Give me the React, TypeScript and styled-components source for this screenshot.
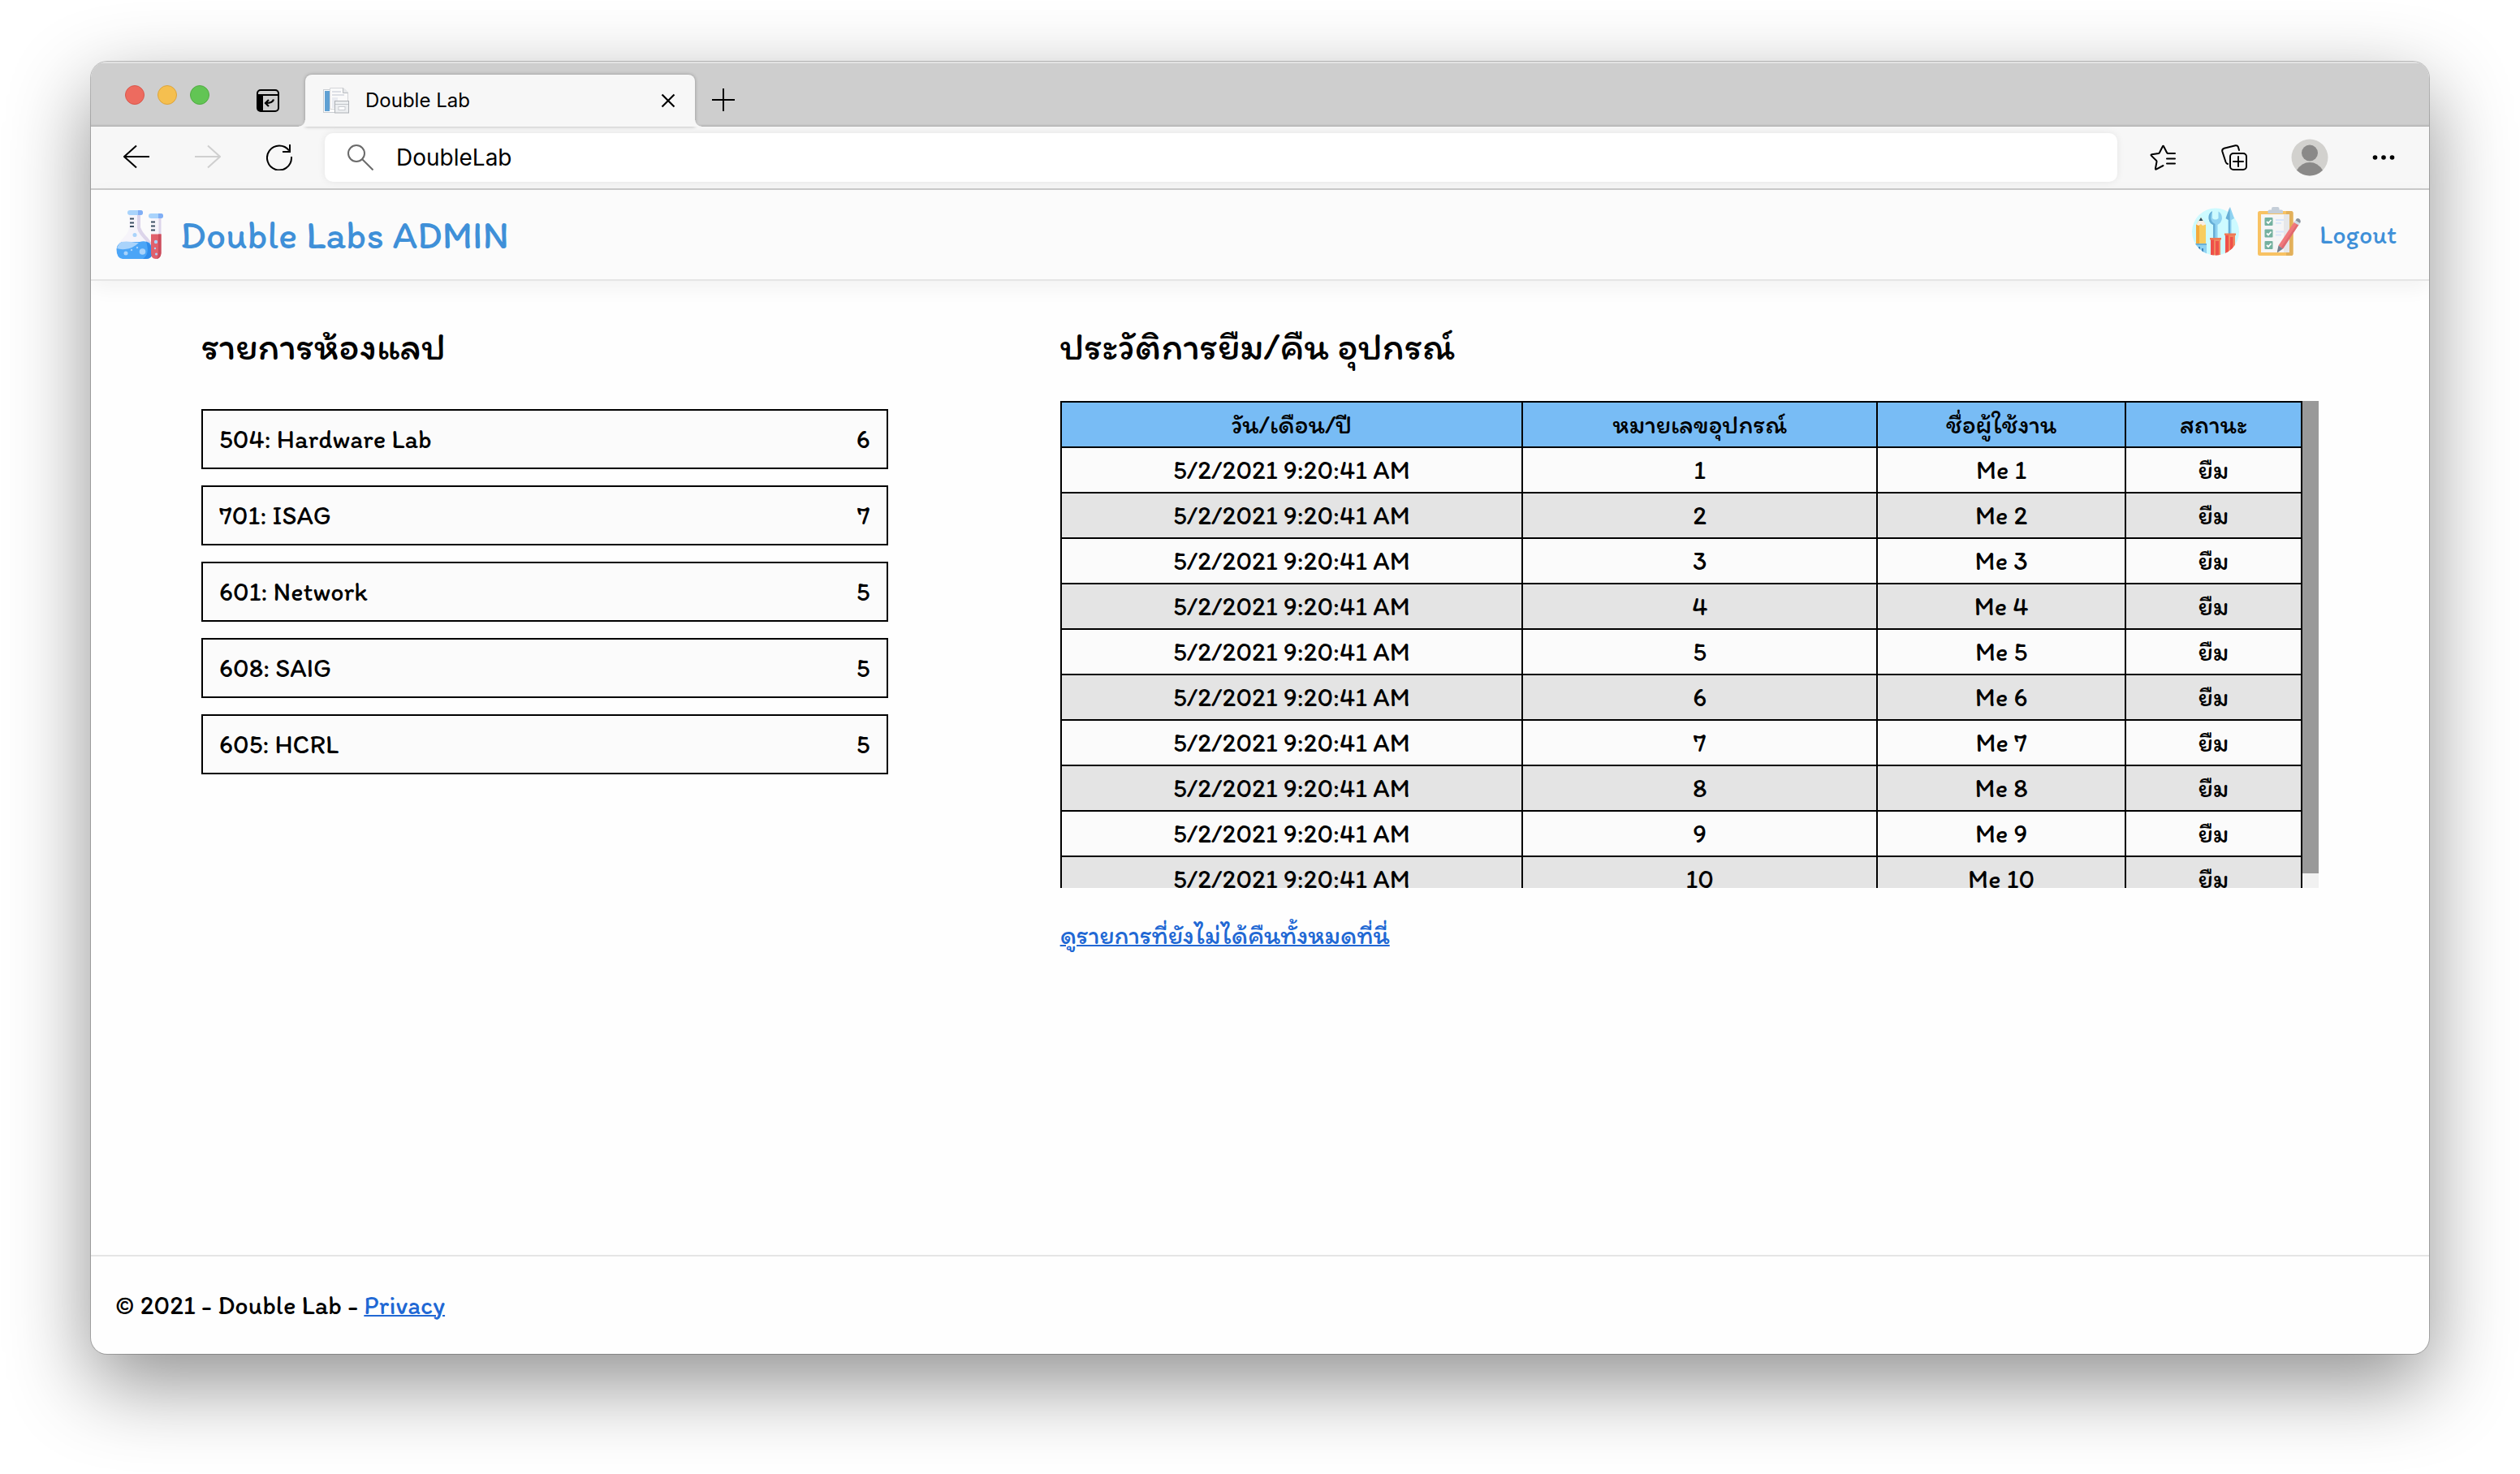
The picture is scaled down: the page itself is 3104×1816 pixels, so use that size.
import React from "react";
import styled, { createGlobalStyle } from "styled-components";

const uiFont = `Inter, "Liberation Sans", sans-serif`;
const pageFont = `Itim, "Noto Sans Thai", "Noto Sans", sans-serif`;
const blue = "#3f90d8";

const GlobalStyle = createGlobalStyle`
  *, *::before, *::after { box-sizing: border-box; }
  body { margin: 0; background: #fff; }
  h1, h2, p, ul { margin: 0; padding: 0; font: inherit; }
  button { margin: 0; padding: 0; border: 0; background: none; cursor: pointer; color: inherit; font: inherit; }
  svg { display: block; }
`;

const Desktop = styled.div`
  display: flex;
  min-height: 100vh;
  padding: 76px 112px 148px;
`;

const Window = styled.div`
  flex: 1;
  display: flex;
  flex-direction: column;
  min-width: 0;
  overflow: hidden;
  border-radius: 20px;
  background: #fefefe;
  box-shadow: 0 0 0 1px rgba(0, 0, 0, 0.22), 0 36px 100px rgba(0, 0, 0, 0.44);
`;

const TitleBar = styled.div`
  display: flex;
  align-items: flex-end;
  height: 80px;
  padding-left: 42px;
  background: #cecece;
  box-shadow: inset 0 2px 0 #e2e2e2, inset 0 -3px 3px -2px rgba(0, 0, 0, 0.2);
`;

const Lights = styled.div`
  display: flex;
  gap: 16px;
  margin-bottom: 27px;
`;

const Light = styled.button<{ $fill: string; $edge: string }>`
  width: 24px;
  height: 24px;
  border: 1px solid ${(p) => p.$edge};
  border-radius: 50%;
  background: ${(p) => p.$fill};
`;

const TabActions = styled.button`
  margin: 0 32px 18px 58px;
`;

const Tab = styled.div`
  position: relative;
  display: flex;
  align-items: center;
  width: 480px;
  height: 64px;
  padding: 0 24px 0 22px;
  border-radius: 8px 8px 0 0;
  background: #f7f7f7;
  box-shadow: 0 0 4px rgba(0, 0, 0, 0.3);

  &::before,
  &::after {
    content: "";
    position: absolute;
    bottom: 0;
    width: 8px;
    height: 8px;
  }
  &::before {
    right: 100%;
    background: radial-gradient(circle at 0 0, transparent 7px, #f7f7f7 8px);
  }
  &::after {
    left: 100%;
    background: radial-gradient(circle at 100% 0, transparent 7px, #f7f7f7 8px);
  }
`;

const TabTitle = styled.span`
  flex: 1;
  margin-left: 20px;
  font: 400 24px/32px ${uiFont};
`;

const NewTab = styled.button`
  margin: 0 0 18px 20px;
`;

const Toolbar = styled.div`
  display: flex;
  align-items: center;
  gap: 56px;
  height: 78px;
  padding: 0 40px;
  border-bottom: 2px solid #cbcbcb;
  background: #f7f7f7;
`;

const AddressBar = styled.label`
  flex: 1;
  display: flex;
  align-items: center;
  gap: 28px;
  height: 60px;
  margin: 0 -16px;
  padding: 0 28px;
  border-radius: 10px;
  background: #fff;
  box-shadow: 0 0 10px rgba(0, 0, 0, 0.08);
`;

const AddressInput = styled.input`
  flex: 1;
  min-width: 0;
  padding: 0;
  border: 0;
  outline: 0;
  background: none;
  color: #000;
  font: 400 28px/36px ${uiFont};
`;

const ToolbarEnd = styled.div`
  display: flex;
  align-items: center;
  gap: 54px;
`;

const SiteHeader = styled.header`
  display: flex;
  align-items: center;
  justify-content: space-between;
  height: 112px;
  padding: 0 40px 0 30px;
  border-bottom: 2px solid #e5e5e5;
  background: #fbfbfb;
  box-shadow: 0 8px 24px rgba(0, 0, 0, 0.05);
  color: ${blue};
  font-family: ${pageFont};
`;

const Brand = styled.a`
  display: flex;
  align-items: center;
  gap: 20px;
  color: inherit;
  text-decoration: none;
  font-size: 48px;
  line-height: 56px;
`;

const HeaderNav = styled.nav`
  display: flex;
  align-items: center;
  gap: 22px;
`;

const IconLink = styled.a`
  padding-bottom: 8px;
`;

const NavLink = styled.a`
  color: inherit;
  text-decoration: none;
  font-size: 32px;
  line-height: 40px;
`;

const Content = styled.main`
  flex: 1;
  display: grid;
  grid-template-columns: 6fr 11fr;
  column-gap: 212px;
  align-items: start;
  padding: 48px 136px;
  color: #000;
  font: 400 32px/40px ${pageFont};
`;

const SectionTitle = styled.h2`
  font-size: 48px;
  line-height: 64px;
`;

const RoomList = styled.ul`
  display: flex;
  flex-direction: column;
  gap: 20px;
  margin-top: 46px;
  list-style: none;
`;

const Room = styled.li`
  display: flex;
  align-items: center;
  justify-content: space-between;
  height: 74px;
  padding: 0 20px;
  border: 2px solid #000;
  background: #fbfbfb;
`;

const TableFrame = styled.div`
  display: flex;
  height: 600px;
  margin-top: 36px;
`;

const TableScroll = styled.div`
  flex: 1;
  overflow-y: auto;
  scrollbar-width: none;
`;

const ScrollTrack = styled.div`
  width: 20px;
  background: #f1f1f1;
`;

const ScrollThumb = styled.div`
  height: 97%;
  background: #999;
`;

const HistoryTable = styled.table`
  width: 100%;
  table-layout: fixed;
  border-collapse: collapse;
  text-align: center;

  th,
  td {
    height: 56px;
    padding: 0;
    border: 2px solid #000;
    font-weight: 400;
  }
  th {
    background: #78bcf5;
  }
  tbody tr {
    background: #fbfbfb;
  }
  tbody tr:nth-child(even) {
    background: #e4e4e4;
  }
`;

const Column = styled.col<{ $share: number }>`
  width: ${(p) => p.$share}%;
`;

const TextLink = styled.a`
  color: #2168d4;
  text-decoration: underline;
  text-decoration-thickness: 2px;
`;

const MoreLine = styled.p`
  margin-top: 38px;
`;

const Footer = styled.footer`
  display: flex;
  align-items: center;
  height: 122px;
  padding: 0 30px;
  border-top: 2px solid #e5e5e5;
  color: #000;
  font: 400 32px/40px ${pageFont};
`;

const FooterText = styled.p`
  white-space: pre;
`;

function TabActionsIcon() {
  return (
    <svg width="28" height="28" viewBox="0 0 28 28" fill="none" stroke="#000" strokeWidth="2">
      <rect x="1" y="1" width="26" height="26" rx="4" />
      <path d="M1 7H27" />
      <path d="M1 7H8V27H4Q1 27 1 24Z" fill="#000" stroke="none" />
      <path d="M21 12.500Q20 17 11.500 17M15 13L11 17L15 21" strokeWidth="2.200" />
    </svg>
  );
}

function FaviconIcon() {
  return (
    <svg width="32" height="32" viewBox="0 0 32 32">
      <rect x=".5" y="2.500" width="20" height="28" fill="#fdfdfd" stroke="#c9cdd2" />
      <rect x="2" y="4" width="6" height="25" fill="#5fa0d3" />
      <path d="M8.500.5H25L30.500 6V26.500H8.500Z" fill="#fafafa" stroke="#d4d6d9" />
      <path d="M24.500.5V6.500H30.500" fill="#e6e8ea" stroke="#b9bcc0" />
      <path d="M11 5H22M11 9H26" stroke="#dddfe5" strokeWidth="2" />
      <rect x="11" y="12" width="7" height="13" fill="#e9ebf0" />
      <rect x="14.500" y="16.500" width="17" height="14.500" fill="#eceef0" stroke="#aeb2b7" />
      <path d="M15 20.500H31" stroke="#c4c7cb" />
      <rect x="19" y="23.500" width="8" height="4" fill="#fff" stroke="#c8cbd0" />
    </svg>
  );
}

function CloseIcon() {
  return (
    <svg width="18" height="18" viewBox="0 0 18 18" stroke="#000" strokeWidth="2.200">
      <path d="M1.500 1.500L16.500 16.500M16.500 1.500L1.500 16.500" />
    </svg>
  );
}

function PlusIcon() {
  return (
    <svg width="30" height="30" viewBox="0 0 30 30" stroke="#000" strokeWidth="2">
      <path d="M15 1V29M1 15H29" />
    </svg>
  );
}

function ArrowIcon({ forward = false }: { forward?: boolean }) {
  return (
    <svg width="32" height="32" viewBox="0 0 32 32" fill="none" stroke={forward ? "#cfcfcf" : "#000"} strokeWidth="2">
      <path d={forward ? "M0 15H31M16 1.500L31 15L16 28.500" : "M32 15H1M16 1.500L1 15L16 28.500"} />
    </svg>
  );
}

function RefreshIcon() {
  return (
    <svg width="32" height="32" viewBox="0 0 32 32" fill="none" stroke="#000" strokeWidth="2">
      <path d="M31 15V17A15 15 0 1 1 28 7.500" />
      <path d="M29 0V9H20" />
    </svg>
  );
}

function SearchIcon() {
  return (
    <svg width="32" height="32" viewBox="0 0 32 32" fill="none" stroke="#6a6a6a" strokeWidth="2">
      <circle cx="11" cy="11" r="10" />
      <path d="M18 18L31.500 31.500" />
    </svg>
  );
}

function FavoritesIcon() {
  return (
    <svg width="34" height="32" viewBox="0 0 34 32" fill="none" stroke="#000" strokeWidth="2" strokeLinecap="round" strokeLinejoin="round">
      <path d="M31 11H22.500Q21.500 11 21 10L17.200 2.500Q16.500 1 15.800 2.500L12 10Q11.600 10.800 10.800 11L2.500 12.300Q.8 12.600 2 13.900L8 19.800Q8.600 20.400 8.500 21.200L7 29.500Q6.800 31.200 8.300 30.400L16.500 26" />
      <path d="M21 17.500H31M21 23.500H31" />
    </svg>
  );
}

function CollectionsIcon() {
  return (
    <svg width="32" height="32" viewBox="0 0 32 32" fill="none" stroke="#000" strokeWidth="2" strokeLinecap="round">
      <path d="M8 24Q6.200 23.500 5.500 21.500L1.300 8.500Q.8 5.800 3.500 4.800L17.500 1.200Q20 .8 20.800 2.800L22 7" />
      <rect x="11" y="11" width="20" height="20" rx="4" />
      <path d="M21 15V27M15 21H27" />
    </svg>
  );
}

function AvatarIcon() {
  return (
    <svg width="46" height="46" viewBox="0 0 46 46">
      <circle cx="23" cy="23" r="22.500" fill="#d2d1ce" />
      <circle cx="23" cy="17.500" r="10" fill="#8a8988" />
      <path d="M7 38.800Q13 29 23 29Q33 29 39 38.800Q32 45.500 23 45.500Q14 45.500 7 38.800Z" fill="#8a8988" />
    </svg>
  );
}

function MoreIcon() {
  return (
    <svg width="30" height="6" viewBox="0 0 30 6">
      <circle cx="3.500" cy="3" r="2.800" />
      <circle cx="14" cy="3" r="2.800" />
      <circle cx="24.500" cy="3" r="2.800" />
    </svg>
  );
}

function LabLogo() {
  return (
    <svg width="60" height="60" viewBox="0 0 60 60">
      <path d="M17 5H31V21Q33 27 40 34L46 44L41 50H9L2 46Q4 40 9 35Q17 28 17 20Z" fill="#f6f4fa" />
      <path d="M27 5H31V21Q33 27 40 34L46 42L41 41Q28 29 27 22Z" fill="#dcd5ea" />
      <path d="M1.500 48Q2 42 8 39L30 39Q36 37 42 40Q46 45 46 52Q45 60 38 60H9Q1.500 59 1.500 48Z" fill="#4ba5f7" />
      <path d="M38 38.500Q45 42 46 52Q45 60 38 60H34Q43 54 38 38.500Z" fill="#2f8bea" />
      <path d="M2 47Q4 41 8 39Q13 38 20 39Q25 40 29 40Q22 47 12 48Q6 48.500 2 47Z" fill="#a9d3fb" />
      <rect x="15" y="0" width="19" height="6" rx="3" fill="#a9d3fb" />
      <path d="M28 0H31Q34 0 34 3T31 6H28Z" fill="#80aef5" />
      <path d="M44 9H54V30H44Z" fill="#f6f4fa" />
      <path d="M53.500 9H56.500V30H53.500Z" fill="#dcd5ea" />
      <path d="M18 10.500H23M18 15.500H23M18 20H23M44 14.500H49M44 19.500H49M44 24.500H49" stroke="#3c5064" strokeWidth="2.200" />
      <path d="M44 29.500H56.500V53Q56 60 50 60T44 53Z" fill="#e0606c" />
      <path d="M53 29.500H56.500V53Q56 59 51 60Q53 57 53 53Z" fill="#cb4c5c" />
      <rect x="41" y="4" width="18" height="6" rx="3" fill="#a9d3fb" />
      <path d="M53 4H56Q59 4 59 7T56 10H53Z" fill="#80aef5" />
      <g fill="#a9d3fb">
        <circle cx="24" cy="30.500" r="2.500" />
        <circle cx="13" cy="53" r="2.500" />
        <circle cx="33.500" cy="51" r="3.800" />
        <circle cx="20" cy="49" r="1.200" />
        <circle cx="27" cy="46" r="1.200" />
        <circle cx="50" cy="39" r="2.200" />
        <circle cx="49" cy="47" r="1.200" />
        <circle cx="50.500" cy="54" r="1.500" />
      </g>
    </svg>
  );
}

function ToolsIcon() {
  return (
    <svg width="60" height="60" viewBox="0 0 60 60">
      <defs>
        <clipPath id="toolsDisc">
          <path d="M0 0H60V30.500H59A29 29 0 0 1 1 30.500H0Z" />
        </clipPath>
      </defs>
      <circle cx="30" cy="30.500" r="29" fill="#cdfaff" />
      <g clipPath="url(#toolsDisc)">
        <path d="M6 22L12 13L18 22V46H6Z" fill="#f8cd60" />
        <path d="M6 22H10V46H6Z" fill="#f3aa3c" />
        <path d="M6.500 21.500L12 13L18 21.500L14 23L12 21L9 23Z" fill="#fbeee4" />
        <path d="M9.500 17L12 13L14.500 17Z" fill="#2e4b5e" />
        <path d="M5 46H19V60H5Z" fill="#8fd2f1" />
        <path d="M5 45H19V47H5Z" fill="#6bb0d6" />
        <path d="M10 49V55M14 51V60" stroke="#3f86bd" strokeWidth="2" />
        <path d="M26 5Q21 8 21.500 14Q22 20 27 22V39H32.500V22Q37.500 19 38 14Q38 8 33.500 5.500V14Q30 17 26 14Z" fill="#8fd2f1" />
        <path d="M26 5Q21 8 21.500 14Q22 20 27 22V39H29.500V21Q24 18 24 13Q24 9 26 5Z" fill="#66aed6" />
        <path d="M45 14L48 0L53 14L49.500 16V33H45.500V16L42.500 14Z" fill="#8fd2f1" />
        <path d="M47.500 0L42.500 14L46 16V33H48Z" fill="#66aed6" />
        <path d="M24 38H36V60H24Z" fill="#f1875e" />
        <path d="M24 40H28V60H24ZM30 42H34V60H30Z" fill="#ef5049" />
        <path d="M23 38H37V40.500H23Z" fill="#ee7a55" />
        <path d="M42 33H54V60H42Z" fill="#f1875e" />
        <path d="M42 35H46V60H42ZM48 37H51.500V60H48Z" fill="#ef5049" />
        <path d="M41 32.500H55V35H41Z" fill="#ee7a55" />
      </g>
    </svg>
  );
}

function ClipboardIcon() {
  return (
    <svg width="54" height="60" viewBox="0 0 54 60">
      <rect x="0" y="5" width="43.500" height="55" rx="2.500" fill="#f8c263" />
      <path d="M35 5H41Q43.500 5 43.500 7.500V57.500Q43.500 60 41 60H35Z" fill="#e2b05b" />
      <rect x="4" y="9" width="35" height="47" fill="#f5f5f6" />
      <path d="M32 9H39V56H32Z" fill="#e6e7e9" />
      <path d="M12.500 8V5Q12.500 3.500 14.500 3.500H17V2Q17 0 19 0H24.500Q26.500 0 26.500 2V3.500H29Q31 3.500 31 5V8Z" fill="#c5ced8" />
      {[13, 27.5, 42].map((y) => (
        <g key={y}>
          <rect x="8.500" y={y} width="10" height="10" rx="1" fill="#74b19f" />
          <path d={`M11 ${y + 5}L13 ${y + 7}L16.500 ${y + 3}`} fill="none" stroke="#fff" strokeWidth="1.800" />
        </g>
      ))}
      <path d="M22 16H32M22 19.800H29M22 30.500H32M22 34.500H29" stroke="#d9e6fa" strokeWidth="1.800" />
      <path d="M45.500 17.500L51 21L31 51.500L25.500 47.500Z" fill="#f0797c" />
      <path d="M49 20L51 21L31 51.500L28.500 50Z" fill="#e06a70" />
      <path d="M25.500 47.500L31 51.500L24.500 56Q23.500 56 24 54.500Z" fill="#76808f" />
      <path d="M44.500 19L46.500 16.500L52 20L50.500 22.500Z" fill="#cfe0e8" />
      <path d="M46.500 16.500Q48 13 51 14.500Q54 17 52 20Z" fill="#8a929d" />
    </svg>
  );
}

const rooms = [
  { name: "504: Hardware Lab", count: 6 },
  { name: "701: ISAG", count: 7 },
  { name: "601: Network", count: 5 },
  { name: "608: SAIG", count: 5 },
  { name: "605: HCRL", count: 5 },
];

const columns = [
  { label: "วัน/เดือน/ปี", share: 37.2 },
  { label: "หมายเลขอุปกรณ์", share: 28.6 },
  { label: "ชื่อผู้ใช้งาน", share: 20 },
  { label: "สถานะ", share: 14.2 },
];

const history = Array.from({ length: 10 }, (_, i) => ({
  date: "5/2/2021 9:20:41 AM",
  device: i + 1,
  user: `Me ${i + 1}`,
  status: "ยืม",
}));

export default function App() {
  return (
    <>
      <GlobalStyle />
      <Desktop>
        <Window>
          <TitleBar>
            <Lights>
              <Light $fill="#ed6b5f" $edge="#d9564b" aria-label="Close window" />
              <Light $fill="#f5bf4f" $edge="#dca43c" aria-label="Minimise window" />
              <Light $fill="#62c554" $edge="#51ab43" aria-label="Zoom window" />
            </Lights>
            <TabActions aria-label="Tab actions">
              <TabActionsIcon />
            </TabActions>
            <Tab>
              <FaviconIcon />
              <TabTitle>Double Lab</TabTitle>
              <button aria-label="Close tab">
                <CloseIcon />
              </button>
            </Tab>
            <NewTab aria-label="New tab">
              <PlusIcon />
            </NewTab>
          </TitleBar>
          <Toolbar>
            <button aria-label="Back">
              <ArrowIcon />
            </button>
            <button aria-label="Forward" disabled>
              <ArrowIcon forward />
            </button>
            <button aria-label="Refresh">
              <RefreshIcon />
            </button>
            <AddressBar>
              <SearchIcon />
              <AddressInput aria-label="Address" defaultValue="DoubleLab" />
            </AddressBar>
            <ToolbarEnd>
              <button aria-label="Favorites">
                <FavoritesIcon />
              </button>
              <button aria-label="Collections">
                <CollectionsIcon />
              </button>
              <button aria-label="Profile">
                <AvatarIcon />
              </button>
              <button aria-label="More">
                <MoreIcon />
              </button>
            </ToolbarEnd>
          </Toolbar>
          <SiteHeader>
            <Brand href="#">
              <LabLogo />
              Double Labs ADMIN
            </Brand>
            <HeaderNav>
              <IconLink href="#tools" aria-label="Tools">
                <ToolsIcon />
              </IconLink>
              <IconLink href="#records" aria-label="Records">
                <ClipboardIcon />
              </IconLink>
              <NavLink href="#logout">Logout</NavLink>
            </HeaderNav>
          </SiteHeader>
          <Content>
            <section>
              <SectionTitle>รายการห้องแลป</SectionTitle>
              <RoomList>
                {rooms.map((room) => (
                  <Room key={room.name}>
                    <span>{room.name}</span>
                    <span>{room.count}</span>
                  </Room>
                ))}
              </RoomList>
            </section>
            <section>
              <SectionTitle>ประวัติการยืม/คืน อุปกรณ์</SectionTitle>
              <TableFrame>
                <TableScroll>
                  <HistoryTable>
                    <colgroup>
                      {columns.map((c) => (
                        <Column key={c.label} $share={c.share} />
                      ))}
                    </colgroup>
                    <thead>
                      <tr>
                        {columns.map((c) => (
                          <th key={c.label}>{c.label}</th>
                        ))}
                      </tr>
                    </thead>
                    <tbody>
                      {history.map((row) => (
                        <tr key={row.device}>
                          <td>{row.date}</td>
                          <td>{row.device}</td>
                          <td>{row.user}</td>
                          <td>{row.status}</td>
                        </tr>
                      ))}
                    </tbody>
                  </HistoryTable>
                </TableScroll>
                <ScrollTrack>
                  <ScrollThumb />
                </ScrollTrack>
              </TableFrame>
              <MoreLine>
                <TextLink href="#unreturned">ดูรายการที่ยังไม่ได้คืนทั้งหมดที่นี่</TextLink>
              </MoreLine>
            </section>
          </Content>
          <Footer>
            <FooterText>
              © 2021 - Double Lab - <TextLink href="#privacy">Privacy</TextLink>
            </FooterText>
          </Footer>
        </Window>
      </Desktop>
    </>
  );
}
